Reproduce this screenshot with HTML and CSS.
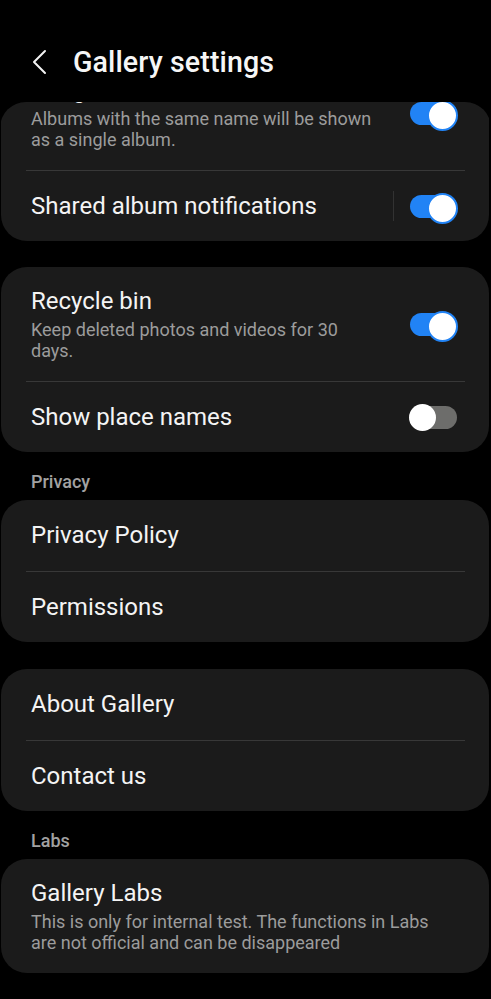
FILE: index.html
```html
<!DOCTYPE html>
<html lang="en">
<head>
    <meta charset="UTF-8" />
    <meta name="viewport" content="width=device-width, initial-scale=1.0" />
    <title>Gallery settings</title>
    <link rel="stylesheet" href="styles.css">
</head>
<body>
    <header class="top-bar">
        <svg class="back" width="16" height="26" viewBox="0 0 16 26">
            <path d="M13 2 L2 13 L13 24" fill="none" stroke="#f2f2f2" stroke-width="2" stroke-linecap="round" stroke-linejoin="round" />
        </svg>
        <h1>Gallery settings</h1>
    </header>

    <div class="scroll">
        <div class="card first">
            <div class="row tall">
                <div class="text">
                    <div class="title">Merge albums with same name</div>
                    <div class="sub">Albums with the same name will be shown as a single album.</div>
                </div>
                <span class="switch on"></span>
            </div>
            <div class="divider"></div>
            <div class="row">
                <div class="text">
                    <div class="title">Shared album notifications</div>
                </div>
                <span class="vline"></span>
                <span class="switch on"></span>
            </div>
        </div>

        <div class="card">
            <div class="row tall">
                <div class="text">
                    <div class="title">Recycle bin</div>
                    <div class="sub">Keep deleted photos and videos for 30 days.</div>
                </div>
                <span class="switch on"></span>
            </div>
            <div class="divider"></div>
            <div class="row">
                <div class="text">
                    <div class="title">Show place names</div>
                </div>
                <span class="switch"></span>
            </div>
        </div>

        <div class="section">Privacy</div>
        <div class="card">
            <div class="row plain"><div class="title">Privacy Policy</div></div>
            <div class="divider"></div>
            <div class="row plain"><div class="title">Permissions</div></div>
        </div>

        <div class="card">
            <div class="row plain"><div class="title">About Gallery</div></div>
            <div class="divider"></div>
            <div class="row plain"><div class="title">Contact us</div></div>
        </div>

        <div class="section">Labs</div>
        <div class="card">
            <div class="row tall">
                <div class="text">
                    <div class="title">Gallery Labs</div>
                    <div class="sub wide">This is only for internal test. The functions in Labs are not official and can be disappeared</div>
                </div>
            </div>
        </div>
    </div>
</body>
</html>
```

FILE: styles.css
```css
* { box-sizing: border-box; margin: 0; padding: 0; }
body {
    font-family: Roboto, "Noto Sans", Arial, sans-serif;
    background-color: #000;
    color: #f4f4f4;
    width: 491px;
    height: 999px;
    overflow: hidden;
}

/* header */
.top-bar {
    height: 102px;
    display: flex;
    align-items: center;
    padding: 22px 0 0 32px;
}
.back {
    display: block;
    margin-right: 25px;
}
.top-bar h1 {
    font-size: 28.6px;
    font-weight: 500;
    letter-spacing: 0.1px;
    color: #f6f6f6;
}

/* scrolling list, clipped under header */
.scroll {
    height: 897px;
    overflow: hidden;
    border-radius: 26px 26px 0 0;
    padding: 0 2px 0 1px;
}
.card {
    background-color: #1b1b1b;
    border-radius: 26px;
    margin-bottom: 27px;
}
.card:nth-child(2) { margin-top: -1px; }
.card.first {
    margin-top: -46px;
}
.row {
    display: flex;
    align-items: center;
    min-height: 70px;
    padding: 0 32px 0 30px;
}
.row.plain { min-height: 70.5px; }
.row.tall {
    padding-top: 20px;
    padding-bottom: 20px;
}
.text {
    flex: 1;
}
.title {
    font-size: 24px;
    line-height: 28px;
    color: #f4f4f4;
}
.sub {
    margin-top: 4px;
    font-size: 18px;
    line-height: 21px;
    color: #9c9c9c;
    padding-right: 30px;
}
.sub.wide { padding-right: 0; }
.divider {
    height: 1px;
    background-color: #383838;
    margin: 0 24px 0 25px;
}
.vline {
    width: 1px;
    height: 30px;
    background-color: #323232;
    margin-right: 16px;
}

/* toggle */
.switch {
    position: relative;
    flex: none;
    width: 47px;
    height: 23px;
    border-radius: 12px;
    background-color: #6d6d6b;
}
.switch::after {
    content: "";
    position: absolute;
    top: -2px;
    left: -1px;
    width: 27px;
    height: 27px;
    border-radius: 50%;
    background-color: #fff;
}
.switch.on {
    background-color: #2183f5;
}
.switch.on::after {
    left: auto;
    right: -1px;
    border: 2px solid #2183f5;
}

.section {
    font-size: 18px;
    font-weight: 500;
    color: #a2a2a2;
    line-height: 20px;
    padding: 0 0 8px 30px;
    margin-top: -7px;
}
```
